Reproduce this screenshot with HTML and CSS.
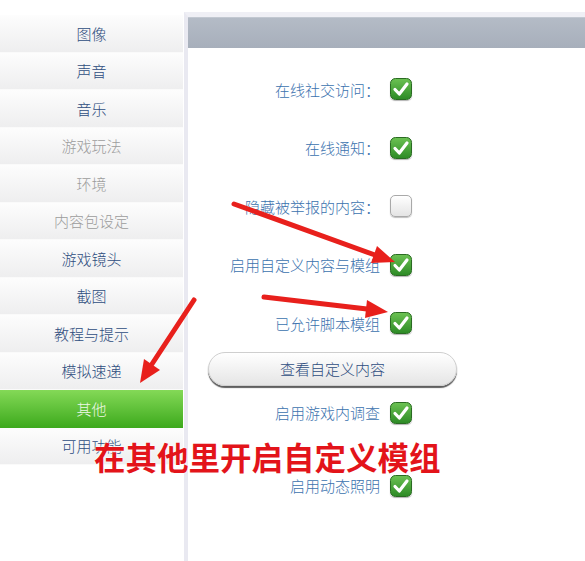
FILE: index.html
```html
<!DOCTYPE html>
<html lang="zh-CN">

<head>
    <meta charset="UTF-8">
    <meta name="viewport" content="width=device-width, initial-scale=1.0">
    <title>设置 - 其他</title>
    <link rel="stylesheet" href="styles.css">
</head>

<body>
    <div class="page">
        <!-- Side menu -->
        <div class="menu">
            <div class="menu-item">图像</div>
            <div class="menu-item">声音</div>
            <div class="menu-item">音乐</div>
            <div class="menu-item off">游戏玩法</div>
            <div class="menu-item off">环境</div>
            <div class="menu-item off">内容包设定</div>
            <div class="menu-item">游戏镜头</div>
            <div class="menu-item">截图</div>
            <div class="menu-item">教程与提示</div>
            <div class="menu-item">模拟速递</div>
            <div class="menu-item active">其他</div>
            <div class="menu-item">可用功能</div>
        </div>

        <!-- Settings panel -->
        <div class="panel">
            <div class="panel-head"></div>
            <div class="options">
                <div class="opt">
                    <span class="label">在线社交访问：</span>
                    <span class="box on"></span>
                </div>
                <div class="opt">
                    <span class="label">在线通知：</span>
                    <span class="box on"></span>
                </div>
                <div class="opt">
                    <span class="label">隐藏被举报的内容：</span>
                    <span class="box"></span>
                </div>
                <div class="opt">
                    <span class="label">启用自定义内容与模组</span>
                    <span class="box on"></span>
                </div>
                <div class="opt">
                    <span class="label">已允许脚本模组</span>
                    <span class="box on"></span>
                </div>
                <button class="btn">查看自定义内容</button>
                <div class="opt small first">
                    <span class="label">启用游戏内调查</span>
                    <span class="box on"></span>
                </div>
                <div class="opt small last">
                    <span class="label">启用动态照明</span>
                    <span class="box on"></span>
                </div>
            </div>
        </div>
    </div>

    <!-- Annotation drawn over the screenshot -->
    <svg class="arrows" width="585" height="561" viewBox="0 0 585 561">
        <g stroke="#e8201c" stroke-width="5" stroke-linecap="round">
            <line x1="234" y1="204" x2="375" y2="255" />
            <line x1="264" y1="297" x2="367" y2="309" />
            <line x1="194" y1="300" x2="152" y2="364" />
        </g>
        <g fill="#e8201c">
            <polygon points="395,262 371,263 377,246" />
            <polygon points="388,312 365,318 367,300" />
            <polygon points="140,383 144,359 160,370" />
        </g>
    </svg>
    <div class="note">在其他里开启自定义模组</div>

    <script>
        // draw the tick boxes
        const tick = `
        <svg width="22" height="22" viewBox="0 0 22 22">
            <defs>
                <linearGradient id="g" x1="0" y1="0" x2="0" y2="1">
                    <stop offset="0" stop-color="#6cc253" />
                    <stop offset="1" stop-color="#2c8a25" />
                </linearGradient>
            </defs>
            <rect x="0.5" y="0.5" width="21" height="21" rx="5" fill="url(#g)" stroke="#2a6b22" />
            <path d="M5 11.5 L9.3 16 L17 6" fill="none" stroke="#fff" stroke-width="3.2" stroke-linecap="round" stroke-linejoin="round" />
        </svg>`;

        document.querySelectorAll(".box.on").forEach(box => {
            box.innerHTML = tick;
        });
    </script>
</body>

</html>
```

FILE: styles.css
```css
* {
    margin: 0;
    padding: 0;
    box-sizing: border-box;
}

body {
    font-family: "Noto Sans CJK SC", "Noto Sans", sans-serif;
    font-weight: 300;
    background-color: #fff;
    width: 585px;
    height: 561px;
    overflow: hidden;
    position: relative;
}

.page {
    display: flex;
    height: 561px;
}

/* Side menu */
.menu {
    width: 183px;
    padding-top: 15px;
    flex-shrink: 0;
}

.menu-item {
    height: 37.5px;
    display: flex;
    align-items: center;
    justify-content: center;
    font-size: 15px;
    color: #2e4d7e;
    background: linear-gradient(#fdfdfd, #eeeeef);
    border-bottom: 1px solid #fafafa;
}

.menu-item.off {
    color: #9c9c9c;
}

.menu-item.active {
    background: linear-gradient(#84d957, #3ca91c);
    color: #eef8e6;
    border-bottom: none;
}

/* Settings panel */
.panel {
    margin-left: 1px;
    margin-top: 12px;
    flex: 1;
    border-top: 5px solid #efeff5;
    border-left: 4px solid #e9e9f1;
    background-color: #fff;
}

.panel-head {
    height: 31px;
    background: linear-gradient(#b4bbc6, #a7afbb);
    border-top: 1px solid #c2c8d1;
}

.options {
    padding-top: 12px;
}

.opt {
    display: grid;
    grid-template-columns: 192px 22px;
    column-gap: 10px;
    align-items: center;
    height: 58.5px;
}

.opt.small {
    height: 28px;
}

.opt.first {
    margin-top: 13px;
}

.opt.last {
    margin-top: 45px;
}

.label {
    text-align: right;
    font-size: 15px;
    color: #3b72ae;
    white-space: nowrap;
}

.box {
    width: 22px;
    height: 22px;
    border-radius: 5px;
    border: 1px solid #a9a9a9;
    background: linear-gradient(#ffffff, #e4e4e4);
    box-shadow: 0 1px 1px rgba(0, 0, 0, 0.25);
    display: block;
}

.box.on {
    border: none;
    background: none;
    box-shadow: 0 1px 1px rgba(0, 0, 0, 0.3);
}

.box svg {
    display: block;
}

.btn {
    display: block;
    margin-left: 20px;
    margin-top: -1px;
    width: 249px;
    height: 34px;
    border-radius: 17px;
    border: 1px solid #cfcfcf;
    background: linear-gradient(#ffffff, #e5e5e5);
    box-shadow: 0 2px 1px #5e5e5e;
    font-family: "Noto Sans CJK SC", sans-serif;
    font-weight: 300;
    font-size: 15px;
    color: #2e4d7e;
}

/* Annotation */
.arrows {
    position: absolute;
    left: 0;
    top: 0;
}

.note {
    position: absolute;
    left: 94px;
    top: 436px;
    font-size: 31.5px;
    font-weight: 700;
    line-height: 40px;
    color: #e3141a;
    white-space: nowrap;
    text-shadow: 0 0 2px #fff, 0 0 2px #fff;
}
```
